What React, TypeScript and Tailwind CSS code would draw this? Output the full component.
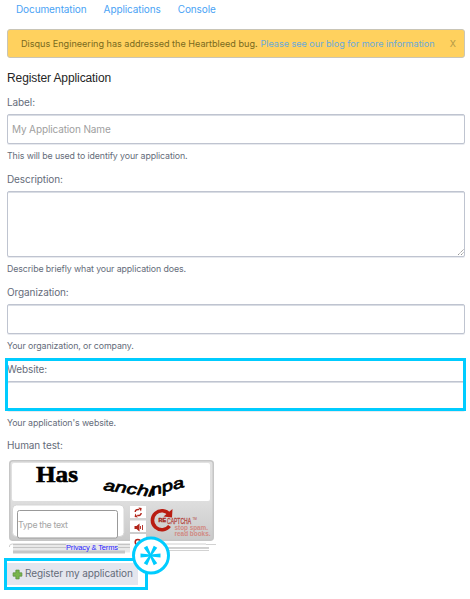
import React from "react";

function Field({ label, help, tall, placeholder }: { label: string; help: string; tall?: boolean; placeholder?: string }) {
  const box = "block w-[458px] rounded-[2px] border border-[#bfc4d0] bg-white shadow-[inset_0_1px_0_#d9dde4,0_1px_0_#e8eaef] outline-none";
  return (
    <div className="mb-px flex flex-col">
      <label className="h-[22px] text-[10px] leading-[20px] tracking-[-0.1px] text-[#656c7a]">{label}</label>
      {tall ? (
        <div className="relative w-[458px]">
          <textarea className={box + " h-[66px] resize-none"} />
          <svg className="absolute bottom-[2px] right-[1px]" width="6" height="6" viewBox="0 0 6 6">
            <path d="M0 6L6 0M3 6L6 3" stroke="#888" strokeWidth="0.9" strokeDasharray="1.4 0.6" />
          </svg>
        </div>
      ) : (
        <input className={box + " h-[30px] px-1 text-[10px] tracking-[-0.13px] placeholder:text-[#a0a0a0]"} placeholder={placeholder} />
      )}
      <p className="h-6 text-[8.8px] leading-[23px] tracking-[-0.1px] text-[#656c7a]">{help}</p>
    </div>
  );
}

function Captcha() {
  return (
    <svg width="210" height="97" viewBox="7 457 210 97" className="block">
      <defs>
        <linearGradient id="shell" x1="0" y1="0" x2="0" y2="1">
          <stop offset="0" stopColor="#e2e2e2" />
          <stop offset="0.5" stopColor="#dedede" />
          <stop offset="1" stopColor="#c9c9c9" />
        </linearGradient>
      </defs>
      <rect x="9.750" y="460.750" width="203.500" height="79.500" rx="3" fill="url(#shell)" stroke="#c6c6c6" strokeWidth="1.500" />
      <rect x="12" y="463" width="198" height="38" rx="2" fill="#fff" />
      <text x="36" y="481.500" fontFamily="Liberation Mono" fontWeight="bold" fontSize="24" stroke="#000" strokeWidth="0.6" textLength="42" lengthAdjust="spacingAndGlyphs" className="font-['Liberation_Serif']">Has</text>
      <g fontFamily="Liberation Sans" fontStyle="italic" fontSize="15" stroke="#000" strokeWidth="0.7">
        <text x="103" y="490" transform="rotate(8 103 490)" textLength="50" lengthAdjust="spacingAndGlyphs">anchi</text>
        <text x="152" y="495.500" transform="rotate(-15 152 495.5)" textLength="34" lengthAdjust="spacingAndGlyphs">npa</text>
      </g>
      <rect x="12.500" y="505" width="111.500" height="31.500" rx="4" fill="#fff" stroke="#d5d5d5" />
      <rect x="17.500" y="510.500" width="100" height="27.500" rx="2" fill="#fff" stroke="#999" />
      <text x="18" y="528" fontFamily="Inter" fontSize="8.800" fill="#a5a5a5" textLength="50">Type the text</text>
      <path d="M9.500 547v-1q0-2 3-2H206M13 547.500H209" fill="none" stroke="#cfcfcf" />
      <path d="M206 544.500H216M150 548.500H209M150 550.500H209" stroke="#d2d2d2" />
      <path d="M13 544.500H130v8H13z" fill="#e9e9e9" />
      <path d="M13 547.500H66M118 547.500H130M13 544.500H66M118 544.500H130" stroke="#c4c4c4" />
      <path d="M13 550.500H125v3H13z" fill="#c6c6c6" />
      <text x="66" y="549.500" fontFamily="Liberation Sans" fontSize="7.500" fill="#2a20ff" textLength="52">Privacy &amp; Terms</text>
      <path d="M130 506h16v12h-16zM130 520.500h16v11.500h-16zM130 534h16v19h-16z" fill="#fff" />
      <g fill="none" stroke="#b2251b" strokeWidth="1.500">
        <path d="M135.200 512q.3-3 4-2.500M141.200 513q-.3 3-4 2.500" />
        <circle cx="137.800" cy="542" r="2.600" />
        <path d="M140.500 526v3M142.500 525v5" strokeWidth="0.900" />
      </g>
      <path d="M138.500 507.500l3.200.5-.7 3.500zM137.800 517.500l-3.200-.5.700-3.500zM134.500 526h2l3-2.500v8l-3-2.500h-2z" fill="#b2251b" />
      <path d="M169.500 514.500A9.500 9.500 0 1 0 169.500 526" fill="none" stroke="#b91d12" strokeWidth="3.600" />
      <path d="M163.500 516.500l8.500 1 .5-8.500z" fill="#b91d12" />
      <text x="158.500" y="522" fontFamily="Liberation Sans" fontWeight="bold" fontSize="4.500" fill="#a31b13" stroke="#a31b13" strokeWidth="0.3" textLength="7.500" lengthAdjust="spacingAndGlyphs">RE</text>
      <text x="167" y="523.500" fontFamily="Liberation Sans" fontSize="8.500" fill="#b3443c" stroke="#b3443c" strokeWidth="0.3" textLength="24" lengthAdjust="spacingAndGlyphs">CAPTCHA</text>
      <text x="192.500" y="519.500" fontFamily="Liberation Sans" fontSize="3" fill="#b3443c">TM</text>
      <g fontFamily="Liberation Sans" fontWeight="bold" fontSize="6.500" fill="#d18a83">
        <text x="174.500" y="530" textLength="33.500" lengthAdjust="spacingAndGlyphs">stop spam.</text>
        <text x="174.500" y="535.500" textLength="36" lengthAdjust="spacingAndGlyphs">read books.</text>
      </g>
    </svg>
  );
}

export default function App() {
  return (
    <main className="relative h-[599px] w-[470px] overflow-hidden bg-white pl-[7px] font-['Inter',sans-serif]">
      <nav className="flex h-[29px] gap-[17px] pl-[9px] pt-px text-[10px] leading-4 tracking-[-0.1px] text-[#4aa3f5]">
        <a>Documentation</a><a>Applications</a><a>Console</a>
      </nav>
      <div className="flex h-[29px] w-[458px] items-center rounded-[3px] border border-[#c9c5b6] bg-[#ffd15e] pl-[13px] pr-2 text-[9.1px] tracking-[-0.01px] text-[#796a20]">
        <span>Disqus Engineering has addressed the Heartbleed bug.</span>
        <a className="ml-[3px] tracking-[-0.03px] text-[#6aa9dc]">Please see our blog for more information</a>
        <span className="ml-auto text-[#b29846]">X</span>
      </div>
      <h1 className="h-[34px] pt-[11px] font-['Liberation_Sans',sans-serif] text-[12px] leading-[18px] tracking-[-0.1px] text-[#252525]">Register Application</h1>
      <Field label="Label:" help="This will be used to identify your application." placeholder="My Application Name" />
      <Field label="Description:" help="Describe briefly what your application does." tall />
      <Field label="Organization:" help="Your organization, or company." />
      <Field label="Website:" help="Your application's website." />
      <div className="h-[21px] text-[10px] leading-[19px] tracking-[-0.1px] text-[#656c7a]">Human test:</div>
      <Captcha />
      <button className="absolute left-1 top-[558px] flex h-8 w-[144px] items-center border-[3px] border-[#00ccff] bg-white">
        <span className="flex h-[22px] w-[131px] items-center gap-[2px] whitespace-nowrap bg-[#e4e6ee] pb-px pl-[5px] text-[10px] tracking-[-0.11px] text-[#656c7a]">
          <svg className="relative top-px shrink-0" width="11" height="11" viewBox="0 0 10 10"><path d="M3.500 1h3v2.500H9v3H6.500V9h-3V6.500H1v-3h2.500z" fill="#79b54d" stroke="#5c9140" strokeWidth="0.7" /></svg>
          Register my application
        </span>
      </button>
      <div className="absolute left-[5px] top-[358px] h-[53px] w-[461px] border-[3px] border-[#00ccff]" />
      <svg className="absolute left-[131px] top-[536px]" width="40" height="40" viewBox="0 0 40 40">
        <circle cx="20" cy="19.500" r="17.500" fill="#fff" stroke="#00ccff" strokeWidth="3" />
        <g fill="#00ccff" transform="translate(19.5 19.500)">
          <path d="M-10-2L0-.9 10-2V2L0 .9-10 2z" />
          <path d="M-10-2L0-.9 10-2V2L0 .9-10 2z" transform="rotate(60)" />
          <path d="M-10-2L0-.9 10-2V2L0 .9-10 2z" transform="rotate(-60)" />
        </g>
      </svg>
    </main>
  );
}
